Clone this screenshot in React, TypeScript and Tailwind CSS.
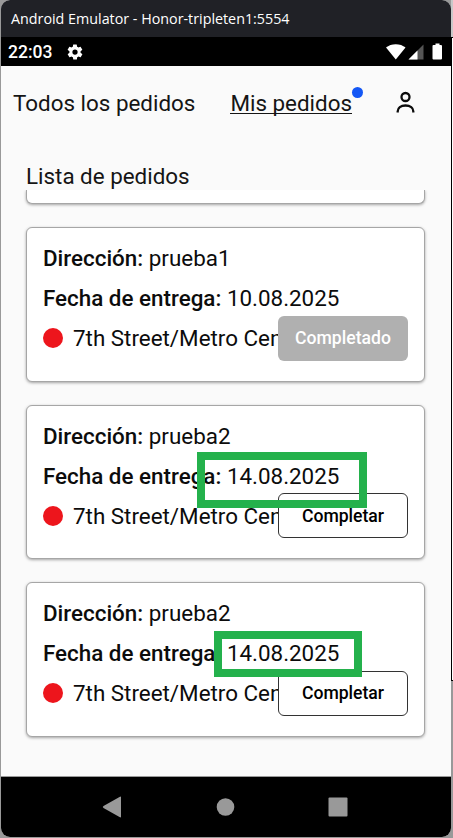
type Order = {
  address: string;
  date: string;
  done?: boolean;
  mark?: string;
};

const orders: Order[] = [
  { address: "prueba1", date: "10.08.2025", done: true },
  { address: "prueba2", date: "14.08.2025", mark: "left-[170px] top-[46.5px] w-[170px] h-[56px]" },
  { address: "prueba2", date: "14.08.2025", mark: "left-[187px] top-[48px] w-[148px] h-[46px]" },
];

function TitleBar() {
  return (
    <div className="flex h-[37px] shrink-0 items-center bg-[#202126] pl-[10px] font-['Open_Sans',sans-serif] text-[14.3px] text-white">
      <span className="whitespace-nowrap">Android Emulator - Honor-tripleten1:5554</span>
    </div>
  );
}

function StatusBar() {
  return (
    <div className="flex h-[29px] shrink-0 items-center bg-black pl-[7px] pr-[8px] text-white">
      <span className="w-[58px] whitespace-nowrap pt-[2px] text-[17.5px] font-medium leading-none">22:03</span>
      <svg width="18" height="18" viewBox="0 0 24 24" fill="currentColor">
        <path d="M19.4 13a7.5 7.5 0 0 0 0-2l2.1-1.6a.5.5 0 0 0 .1-.7l-2-3.4a.5.5 0 0 0-.6-.2l-2.5 1a7.3 7.3 0 0 0-1.7-1l-.4-2.7a.5.5 0 0 0-.5-.4h-4a.5.5 0 0 0-.4.4l-.4 2.7a7.7 7.7 0 0 0-1.7 1l-2.5-1a.5.5 0 0 0-.6.2l-2 3.4a.5.5 0 0 0 .1.7L4.6 11a7.5 7.5 0 0 0 0 2l-2.1 1.6a.5.5 0 0 0-.1.7l2 3.4c.1.2.4.3.6.2l2.5-1c.5.4 1.1.7 1.7 1l.4 2.7c0 .2.2.4.4.4h4c.3 0 .5-.2.5-.4l.4-2.7a7.3 7.3 0 0 0 1.7-1l2.5 1c.2.1.5 0 .6-.2l2-3.4a.5.5 0 0 0-.1-.7zM12 15.5a3.5 3.5 0 1 1 0-7 3.5 3.5 0 0 1 0 7z" />
      </svg>
      <svg className="ml-auto" width="57" height="18" viewBox="0 0 57 18">
        <path d="M0 4.5C5 0 14.5 0 19.5 4.5L9.8 16.5z" fill="white" />
        <path d="M37.5 1.5V16.5H22.5z" fill="#555" />
        <path d="M31.5 7.5V16.5H22.5z" fill="white" />
        <path d="M49.5 2V.5h4V2H55q1 0 1 1v12.500q0 1-1 1h-7.500q-1 0-1-1V3q0-1 1-1z" fill="white" />
      </svg>
    </div>
  );
}

function Header() {
  return (
    <header className="flex h-[74px] shrink-0 items-center pl-[12px] pr-[36px] text-[22.4px] leading-[26px]">
      <span className="-mt-px whitespace-nowrap">Todos los pedidos</span>
      <span className="relative -mt-px ml-auto mr-[43px] whitespace-nowrap">
        Mis pedidos
        <span className="absolute inset-x-0 bottom-[2px] h-px bg-[#151515]" />
        <span className="absolute -right-[11px] -top-[3px] size-[11px] rounded-full bg-[#1457f5]" />
      </span>
      <svg className="-mt-[2px]" width="20" height="24" viewBox="0 0 20 24" fill="none" stroke="#0b0b0b" strokeWidth="2.3">
        <circle cx="10.5" cy="7" r="4" />
        <path d="M2.7 22.5v-1.2c0-3.5 3-5.8 7.8-5.8s7.8 2.300 7.800 5.800v1.200" />
      </svg>
    </header>
  );
}

function OrderCard({ order }: { order: Order }) {
  return (
    <article className="relative h-[154.5px] shrink-0 rounded-[6px] border border-[#a6a6a6] bg-white pl-[16px] pt-[10px] text-[22.4px] leading-[40px] text-[#0c0c0c] shadow-[0_1px_3px_rgba(0,0,0,0.35)]">
      <p className="whitespace-nowrap">
        <span className="font-medium">Dirección:</span> {order.address}
      </p>
      <p className="whitespace-nowrap">
        <span className="font-medium">Fecha de entrega:</span> {order.date}
      </p>
      <div className="flex h-[40px] items-center">
        <span className="mr-[10px] size-[20px] shrink-0 rounded-full bg-[#ed151c]" />
        <span className="w-[205px] shrink-0 overflow-hidden whitespace-nowrap">7th Street/Metro Center</span>
        <button
          className={
            "h-[45px] w-[130px] shrink-0 rounded-[6px] pt-[2px] text-[17.6px] font-medium leading-none " +
            (order.done ? "bg-[#b0b0b0] text-white" : "border border-[#333] bg-white text-black")
          }
        >
          {order.done ? "Completado" : "Completar"}
        </button>
      </div>
      {order.mark && <span className={"absolute border-8 border-[#24b14c] " + order.mark} />}
    </article>
  );
}

function NavBar() {
  return (
    <nav className="flex h-[61px] shrink-0 items-center border-t border-[#999] bg-black pb-px pl-[101px]">
      <svg width="248" height="22" viewBox="0 0 248 22" fill="#999">
        <path d="M19 1.5V20.500Q19 22 17.500 21L1.500 12Q0 11 1.500 10L17.500 1Q19 0 19 1.500z" />
        <circle cx="123.5" cy="11" r="8.8" />
        <rect x="226.5" y="1.5" width="19" height="19" rx="1" />
      </svg>
    </nav>
  );
}

export default function App() {
  return (
    <div className="flex h-[838px] w-[453px] overflow-hidden bg-[#999] pb-px pl-px font-[Roboto,sans-serif] text-[#151515]">
      <div className="flex h-[837px] w-[450px] shrink-0 flex-col overflow-hidden rounded-[9px] bg-[#fafafa]">
        <TitleBar />
        <StatusBar />
        <Header />
        <h1 className="flex h-[50px] shrink-0 items-end pl-[25px] text-[22.4px] leading-[27px]">Lista de pedidos</h1>
        <main className="flex h-[586px] shrink-0 flex-col gap-[23px] overflow-hidden pl-[25px] pr-[26px]">
          <div className="h-[14px] shrink-0 rounded-b-[6px] border border-t-0 border-[#a6a6a6] bg-white shadow-[0_1px_3px_rgba(0,0,0,0.35)]" />
          {orders.map((order, i) => (
            <OrderCard key={i} order={order} />
          ))}
        </main>
        <NavBar />
      </div>
      <div className="flex w-[2px] shrink-0 flex-col">
        <div className="h-[37px] bg-[#c8c8c8]" />
        <div className="h-[644px] border-y border-l border-black bg-white" />
      </div>
    </div>
  );
}
